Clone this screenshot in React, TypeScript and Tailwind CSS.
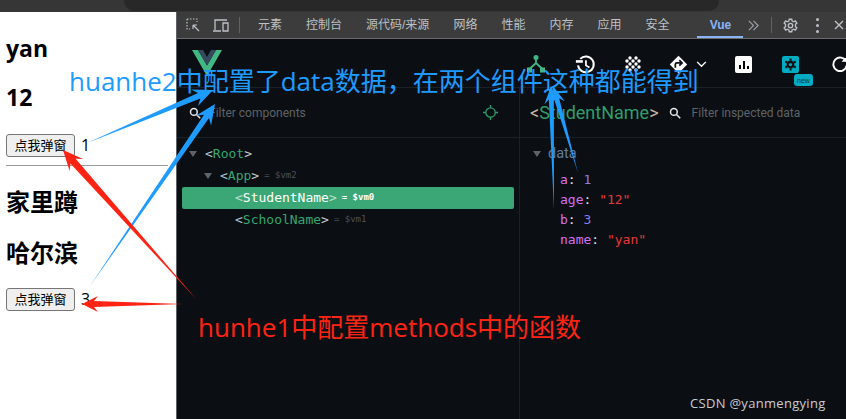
import React from "react";

const mono = "font-['DejaVu_Sans_Mono','Liberation_Mono','Noto_Sans_CJK_SC',monospace]";

function Arrow({ tail, tip, color, head = 20, barb = 9, half = 3 }: { tail: [number, number]; tip: [number, number]; color: string; head?: number; barb?: number; half?: number }) {
  const dx = tip[0] - tail[0];
  const dy = tip[1] - tail[1];
  const len = Math.hypot(dx, dy);
  const ux = dx / len;
  const uy = dy / len;
  const nx = -uy;
  const ny = ux;
  const p = (along: number, side: number) => `${tip[0] - ux * along + nx * side},${tip[1] - uy * along + ny * side}`;
  const pts = [
    `${tail[0]},${tail[1]}`,
    p(head * 0.75, half),
    p(head, barb),
    `${tip[0]},${tip[1]}`,
    p(head, -barb),
    p(head * 0.75, -half),
  ].join(" ");
  return <polygon points={pts} fill={color} />;
}

function Tab({ label, active }: { label: string; active?: boolean }) {
  return (
    <div className={`h-full flex items-center justify-center text-[12px] relative ${active ? "text-[#8ab4f8] font-bold w-[46px]" : "text-[#bdc1c6] px-3"}`}>
      {label}
      {active && <div className="absolute left-0 right-0 bottom-0 h-[2px] bg-[#8ab4f8]" />}
    </div>
  );
}

function Row({ indent, name, vm, selected, arrow }: { indent: string; name: string; vm?: string; selected?: boolean; arrow?: boolean }) {
  return (
    <div className={`h-[22px] flex items-center rounded-[2px] text-[13px] ${indent} ${selected ? "bg-[#3ba776]" : ""}`}>
      {arrow && <span className="w-0 h-0 mr-[8px] border-l-[4px] border-r-[4px] border-t-[6px] border-l-transparent border-r-transparent border-t-[#5f6368]" />}
      <span className={selected ? "text-[#b9e0cc]" : "text-[#a8c7d8]"}>&lt;</span>
      <span className={selected ? "text-white" : "text-[#34a66f]"}>{name}</span>
      <span className={selected ? "text-[#b9e0cc]" : "text-[#c8ccd0]"}>&gt;</span>
      {vm && <span className={`ml-[5px] text-[9px] ${selected ? "text-white font-bold" : "text-[#4b5157]"}`}>= {vm}</span>}
    </div>
  );
}

function Kv({ k, v, str }: { k: string; v: string; str?: boolean }) {
  return (
    <div className="h-[20px] flex items-center text-[13px]">
      <span className="text-[#d46ff0]">{k}</span>
      <span className="text-[#e0e3e6]">:&nbsp;</span>
      <span className={str ? "text-[#e53935]" : "text-[#8a7cf0]"}>{v}</span>
    </div>
  );
}

const Search = () => (
  <svg viewBox="0 0 16 16" className="w-[12px] h-[12px]" fill="none" stroke="#e8eaed" strokeWidth="2">
    <circle cx="6.500" cy="6.500" r="4.500" />
    <path d="M10 10l5 5" />
  </svg>
);

export default function App() {
  return (
    <div className="relative w-[846px] h-[419px] overflow-hidden bg-[#292a2d] font-['Liberation_Sans','Noto_Sans_CJK_SC',sans-serif]">
      <div className="h-[12px] bg-[#363636] flex">
        <div className="ml-[124px] w-[595px] h-[11px] bg-[#282828] rounded-b-[10px]" />
      </div>
      <div className="flex h-[407px]">
        <div className="w-[176px] bg-white text-black pl-[6px] pt-[23px]">
          <h3 className="text-[23px] leading-[26px] font-bold font-['Open_Sans','Noto_Sans_CJK_SC',sans-serif]">yan</h3>
          <h3 className="mt-[23px] text-[23px] leading-[26px] font-bold font-['Open_Sans','Noto_Sans_CJK_SC',sans-serif]">12</h3>
          <div className="mt-[23px] flex items-center">
            <button className="w-[69px] h-[23px] bg-[#efefef] border border-[#767676] rounded-[3px] text-[13px] leading-none">点我弹窗</button>
            <span className="ml-[6px] text-[16px] font-['Open_Sans',sans-serif]">1</span>
          </div>
          <div className="mt-[8px] h-[1px] bg-[#9a9a9a] w-[162px]" />
          <h3 className="mt-[24px] text-[24px] leading-[26px] font-bold">家里蹲</h3>
          <h3 className="mt-[25px] text-[24px] leading-[26px] font-bold">哈尔滨</h3>
          <div className="mt-[20px] flex items-center">
            <button className="w-[69px] h-[23px] bg-[#efefef] border border-[#767676] rounded-[3px] text-[13px] leading-none">点我弹窗</button>
            <span className="ml-[6px] text-[16px] font-['Open_Sans',sans-serif]">3</span>
          </div>
        </div>
        <div className="flex-1 flex flex-col border-l border-[#5f6368] min-w-0">
          <div className="h-[27px] bg-[#3c3c3c] border-b border-[#6b6b6b] flex items-center shrink-0">
            <svg viewBox="0 0 16 16" className="ml-[8px] w-[16px] h-[16px]" fill="none" stroke="#bdc1c6" strokeWidth="1.200">
              <path d="M2 2h10v3M2 2v10h3" strokeDasharray="1.500 1.500" />
              <path d="M8 8l6 6M8 8h4M8 8v4" />
            </svg>
            <svg viewBox="0 0 18 16" className="ml-[11px] w-[18px] h-[16px]" fill="none" stroke="#bdc1c6" strokeWidth="1.300">
              <path d="M1 14h8M3 13V3h12M11 6h5v8h-5z" />
            </svg>
            <div className="ml-[9px] w-[1px] h-[16px] bg-[#5f6368]" />
            <div className="ml-[6px] flex h-full items-center">
              <Tab label="元素" />
              <Tab label="控制台" />
              <Tab label="源代码/来源" />
              <Tab label="网络" />
              <Tab label="性能" />
              <Tab label="内存" />
              <Tab label="应用" />
              <Tab label="安全" />
            </div>
            <div className="ml-[16px] h-full"><Tab label="Vue" active /></div>
            <svg viewBox="0 0 14 12" className="ml-[4px] w-[13px] h-[11px]" fill="none" stroke="#9aa0a6" strokeWidth="1.300">
              <path d="M2 1l5 5-5 5M7 1l5 5-5 5" />
            </svg>
            <div className="ml-[11px] w-[1px] h-[16px] bg-[#5f6368]" />
            <svg viewBox="0 0 24 24" className="ml-[11px] w-[15px] h-[15px]" fill="none" stroke="#bdc1c6" strokeWidth="2.200">
              <circle cx="12" cy="12" r="3.500" />
              <path d="M10 2h4l.6 3 2.600 1.100 2.600-1.600 2.400 3.600-2.200 2v3.800l2.200 2-2.400 3.600-2.600-1.600-2.600 1.100-.6 3h-4l-.6-3-2.600-1.100-2.600 1.600-2.400-3.600 2.200-2v-3.800l-2.200-2 2.400-3.600 2.600 1.600L9.400 5z" />
            </svg>
            <div className="ml-[18px] flex flex-col gap-[3px]">
              <div className="w-[3px] h-[3px] rounded-full bg-[#bdc1c6]" />
              <div className="w-[3px] h-[3px] rounded-full bg-[#bdc1c6]" />
              <div className="w-[3px] h-[3px] rounded-full bg-[#bdc1c6]" />
            </div>
            <svg viewBox="0 0 10 10" className="ml-[15px] w-[10px] h-[10px]" fill="none" stroke="#bdc1c6" strokeWidth="1.400">
              <path d="M1 1l8 8M9 1l-8 8" />
            </svg>
          </div>
          <div className="flex-1 bg-[#0b0f13] flex flex-col min-h-0">
            <div className="h-[49px] border-b border-[#1b2128] shrink-0 flex items-start relative overflow-hidden">
              <svg viewBox="0 0 30 26" className="ml-[15px] mt-[11px] w-[30px] h-[26px] shrink-0">
                <path d="M0 0h6l9 15.500L24 0h6L15 26z" fill="#41b883" />
                <path d="M6 0h5l4 7 4-7h5l-9 15.500z" fill="#35495e" />
              </svg>
              <div className="ml-auto flex items-center mt-[15px] h-[20px] -mr-[3px]">
                <svg viewBox="0 0 18 18" className="w-[18px] h-[18px] mr-[30px]">
                  <circle cx="9" cy="2.500" r="2.500" fill="#41b883" />
                  <rect x="0" y="12.500" width="5" height="5" fill="#41b883" />
                  <rect x="13" y="12.500" width="5" height="5" fill="#41b883" />
                  <path d="M9 3v6M9 8l-6.500 6M9 8l6.500 6" stroke="#41b883" strokeWidth="1.800" fill="none" />
                </svg>
                <svg viewBox="0 0 24 24" className="w-[21px] h-[21px] mr-[29px]">
                  <path d="M6 5.500A9 9 0 1 1 3.500 13" fill="none" stroke="#fff" strokeWidth="2.200" />
                  <path d="M1 7h8v3H1z" fill="#fff" />
                  <path d="M12.500 7v6l4 2.500" fill="none" stroke="#fff" strokeWidth="2" />
                </svg>
                <svg viewBox="0 0 16 16" className="w-[16px] h-[16px] mr-[28px]">
                  {[[5, 2], [11, 2], [2, 5], [8, 5], [14, 5], [5, 8], [11, 8], [2, 11], [8, 11], [14, 11], [5, 14], [11, 14]].map(([x, y]) => (
                    <circle key={`${x}-${y}`} cx={x} cy={y} r="1.700" fill="#fff" />
                  ))}
                </svg>
                <svg viewBox="0 0 24 24" className="w-[19px] h-[19px]">
                  <path d="M12 1l11 11-11 11L1 12z" fill="#fff" />
                  <path d="M8 16v-4a2 2 0 0 1 2-2h6M13 6.500l3.500 3.500-3.500 3.500" stroke="#0b0f13" strokeWidth="2.200" fill="none" />
                </svg>
                <svg viewBox="0 0 12 8" className="ml-[8px] mr-[28px] w-[11px] h-[7px]" fill="none" stroke="#fff" strokeWidth="1.600">
                  <path d="M1 1l5 5 5-5" />
                </svg>
                <div className="w-[17px] h-[17px] rounded-[2px] bg-white flex items-end justify-center gap-[2px] pb-[4px] mr-[30px]">
                  <div className="w-[2px] h-[4px] bg-black" />
                  <div className="w-[2px] h-[8px] bg-black" />
                  <div className="w-[2px] h-[3px] bg-black" />
                </div>
                <div className="relative mr-[32px]">
                  <div className="w-[17px] h-[17px] rounded-[2px] bg-[#00acc1] flex items-center justify-center">
                    <svg viewBox="0 0 24 24" className="w-[13px] h-[13px]" fill="none" stroke="#0b0f13" strokeWidth="4">
                      <circle cx="12" cy="12" r="5" />
                      <path d="M12 1v4M12 19v4M2.500 6.500l3.500 2M18 15.500l3.500 2M2.500 17.500l3.500-2M18 8.500l3.500-2" />
                    </svg>
                  </div>
                  <div className="absolute left-[12px] top-[18px] w-[19px] h-[12px] rounded-[3px] bg-[#00acc1] text-[7px] leading-[13px] text-center text-[#0b3a44]">new</div>
                </div>
                <svg viewBox="0 0 24 24" className="w-[18px] h-[18px]" fill="none" stroke="#fff" strokeWidth="2.600">
                  <path d="M20 8A9 9 0 1 0 21 14" />
                  <path d="M21 2v7h-7" fill="#fff" stroke="none" />
                </svg>
              </div>
            </div>
            <div className="flex flex-1 min-h-0">
              <div className="w-[343px] border-r border-[#1b2128] flex flex-col shrink-0">
                <div className="h-[50px] border-b border-[#1b2128] flex items-center pl-[12px] pr-[21px]">
                  <Search />
                  <span className="ml-[8px] text-[12px] text-[#5f6368] font-['Roboto',sans-serif]">Filter components</span>
                  <svg viewBox="0 0 16 16" className="ml-auto w-[15px] h-[15px]" fill="none" stroke="#2f9d6a" strokeWidth="1.400">
                    <circle cx="8" cy="8" r="5" />
                    <path d="M8 0v3M8 13v3M0 8h3M13 8h3" />
                  </svg>
                </div>
                <div className={`pt-[5px] pl-[5px] pr-[5px] ${mono}`}>
                  <Row indent="pl-[7px]" name="Root" arrow />
                  <Row indent="pl-[22px]" name="App" vm="$vm2" arrow />
                  <Row indent="pl-[53px]" name="StudentName" vm="$vm0" selected />
                  <Row indent="pl-[53px]" name="SchoolName" vm="$vm1" />
                </div>
              </div>
              <div className="flex-1 min-w-0 flex flex-col">
                <div className="h-[50px] border-b border-[#1b2128] flex items-center pl-[10px] shrink-0">
                  <span className="text-[18px] font-['Roboto',sans-serif] text-[#c8b8a0]">&lt;<span className="text-[#2f9d6a]">StudentName</span>&gt;</span>
                  <span className="ml-[10px] flex"><Search /></span>
                  <span className="ml-[11px] text-[12px] text-[#5f6368] font-['Roboto',sans-serif]">Filter inspected data</span>
                </div>
                <div className="pt-[5px] pl-[13px]">
                  <div className="flex items-center h-[22px]">
                    <span className="w-0 h-0 border-l-[4px] border-r-[4px] border-t-[6px] border-l-transparent border-r-transparent border-t-[#5f6368]" />
                    <span className="ml-[7px] text-[14.500px] text-[#5f7ca0] font-['Roboto',sans-serif]">data</span>
                  </div>
                  <div className={`pl-[27px] pt-[5px] ${mono}`}>
                    <Kv k="a" v="1" />
                    <Kv k="age" v={'"12"'} str />
                    <Kv k="b" v="3" />
                    <Kv k="name" v={'"yan"'} str />
                  </div>
                </div>
              </div>
            </div>
          </div>
        </div>
      </div>

      <svg className="absolute left-0 top-0 pointer-events-none" width="846" height="419" viewBox="0 0 846 419">
        <Arrow tail={[87, 143]} tip={[213, 90]} color="#1e9bff" />
        <Arrow tail={[90, 286]} tip={[215, 104]} color="#1e9bff" />
        <Arrow tail={[578, 173]} tip={[553, 86]} color="#1e9bff" head={18} barb={7} half={2.500} />
        <Arrow tail={[554, 210]} tip={[551, 86]} color="#1e9bff" head={18} barb={7} half={2.500} />
        <Arrow tail={[197, 300]} tip={[63, 150]} color="#ff2314" half={3.500} />
        <Arrow tail={[183, 304]} tip={[82, 304]} color="#ff2314" head={16} barb={8} />
      </svg>
      <div className="absolute left-[69px] top-[66px] text-[26px] leading-[30px] text-[#1e9bff] whitespace-nowrap font-['Open_Sans','Noto_Sans_CJK_SC',sans-serif]">huanhe2中配置了data数据，在两个组件这种都能得到</div>
      <div className="absolute left-[198px] top-[312px] text-[26px] leading-[30px] text-[#ff2314] whitespace-nowrap font-['Open_Sans','Noto_Sans_CJK_SC',sans-serif]">hunhe1中配置methods中的函数</div>
      <div className="absolute left-[690px] top-[394px] text-[13px] text-[#c8ccd0] tracking-[0.300px] font-['Open_Sans',sans-serif]">CSDN @yanmengying</div>
    </div>
  );
}
